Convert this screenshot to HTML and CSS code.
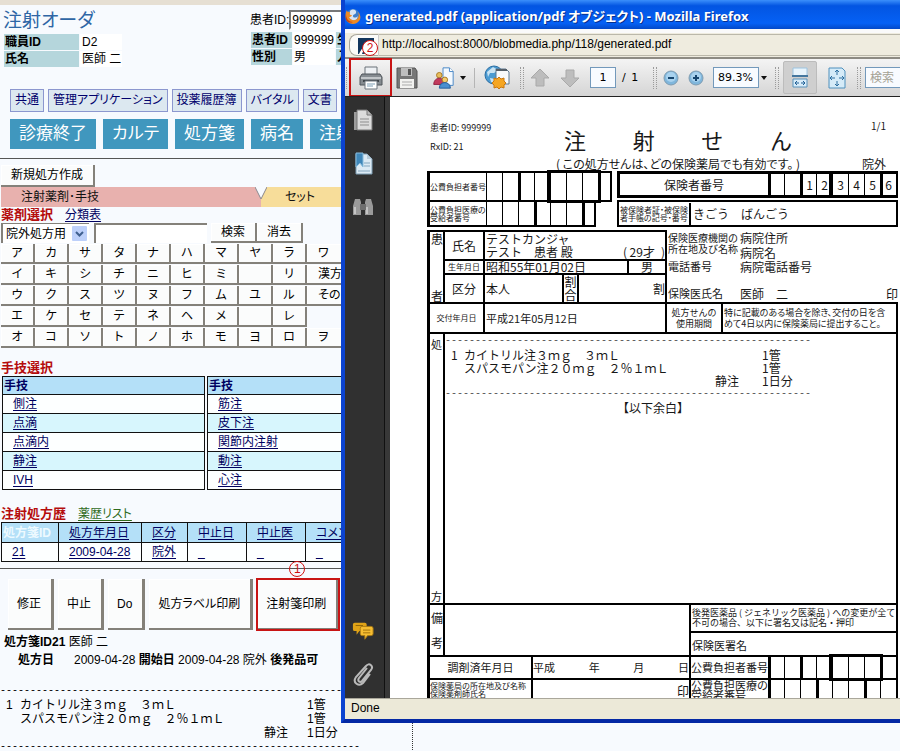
FILE: index.html
```html
<!DOCTYPE html>
<html lang="ja">
<head>
<meta charset="utf-8">
<title>注射オーダ</title>
<link rel="stylesheet" href="styles.css">
</head>
<body>
<main class="page">
  <header class="head">
    <div class="staff">
      <h1>注射オーダ</h1>
      <table class="info staff-info">
        <tr><th scope="row">職員ID</th><td>D2</td></tr>
        <tr><th scope="row">氏名</th><td>医師 二</td></tr>
      </table>
    </div>
    <div class="patient">
      <div class="patient-search"><label for="pid">患者ID:</label><input id="pid" type="text" value="999999"></div>
      <table class="info patient-info">
        <tr><th scope="row">患者ID</th><td>999999</td><th scope="row">生</th></tr>
        <tr><th scope="row">性別</th><td>男</td><th scope="row">入</th></tr>
      </table>
    </div>
  </header>

  <nav class="subnav">
    <a href="#">共通</a><a href="#">管理アプリケーション</a><a href="#">投薬履歴簿</a><a href="#">バイタル</a><a href="#">文書</a><a href="#">&nbsp;</a>
  </nav>
  <nav class="mainnav">
    <a href="#">診療終了</a><a href="#">カルテ</a><a href="#">処方箋</a><a href="#">病名</a><a href="#">注射</a>
  </nav>
  <hr>

  <section class="order">
    <button class="btn new-rx" type="button">新規処方作成</button>
    <div class="tabs">
      <a class="tab tab-drug" href="#">注射薬剤･手技</a>
      <svg class="tab-notch" viewBox="0 0 12 20"><path d="M0 0 6 12 12 0z" fill="#f7fafe"/><path d="M6 12 12 0V20H6z" fill="#f7dd9a"/><path d="M0 0 6 12 12 0" fill="none" stroke="#8a8a90"/></svg>
      <a class="tab tab-set" href="#">セット</a>
    </div>
    <div class="sec-title"><h2>薬剤選択</h2><a href="#">分類表</a></div>
    <div class="search">
      <div class="select-wrap">
        <select aria-label="処方区分"><option>院外処方用</option></select>
        <svg class="select-arrow" viewBox="0 0 15 15"><rect width="15" height="15" rx="1" fill="#bdd0fa"/><path d="M4 6l3.500 3.500L11 6" fill="none" stroke="#40608f" stroke-width="2"/></svg>
      </div>
      <input type="text" aria-label="薬剤名">
      <button class="btn" type="button">検索</button><button class="btn" type="button">消去</button>
    </div>
    <div class="kana">
      <button class="btn">ア</button><button class="btn">カ</button><button class="btn">サ</button><button class="btn">タ</button><button class="btn">ナ</button><button class="btn">ハ</button><button class="btn">マ</button><button class="btn">ヤ</button><button class="btn">ラ</button><button class="btn wide">ワ</button>
      <button class="btn">イ</button><button class="btn">キ</button><button class="btn">シ</button><button class="btn">チ</button><button class="btn">ニ</button><button class="btn">ヒ</button><button class="btn">ミ</button><button class="btn"></button><button class="btn">リ</button><button class="btn wide">漢方</button>
      <button class="btn">ウ</button><button class="btn">ク</button><button class="btn">ス</button><button class="btn">ツ</button><button class="btn">ヌ</button><button class="btn">フ</button><button class="btn">ム</button><button class="btn">ユ</button><button class="btn">ル</button><button class="btn wide">その</button>
      <button class="btn">エ</button><button class="btn">ケ</button><button class="btn">セ</button><button class="btn">テ</button><button class="btn">ネ</button><button class="btn">ヘ</button><button class="btn">メ</button><button class="btn"></button><button class="btn">レ</button><span></span>
      <button class="btn">オ</button><button class="btn">コ</button><button class="btn">ソ</button><button class="btn">ト</button><button class="btn">ノ</button><button class="btn">ホ</button><button class="btn">モ</button><button class="btn">ヨ</button><button class="btn">ロ</button><button class="btn wide">ヲ</button>
    </div>
  </section>

  <section class="technique">
    <h2>手技選択</h2>
    <div class="tech-tables">
      <table class="grid-table tech">
        <tr><th>手技</th></tr>
        <tr><td><a href="#">側注</a></td></tr>
        <tr><td><a href="#">点滴</a></td></tr>
        <tr><td><a href="#">点滴内</a></td></tr>
        <tr><td><a href="#">静注</a></td></tr>
        <tr><td><a href="#">IVH</a></td></tr>
      </table>
      <table class="grid-table tech">
        <tr><th>手技</th></tr>
        <tr><td><a href="#">筋注</a></td></tr>
        <tr><td><a href="#">皮下注</a></td></tr>
        <tr><td><a href="#">関節内注射</a></td></tr>
        <tr><td><a href="#">動注</a></td></tr>
        <tr><td><a href="#">心注</a></td></tr>
      </table>
    </div>
  </section>

  <section class="history">
    <div class="sec-title"><h2>注射処方歴</h2><a class="green" href="#">薬歴リスト</a></div>
    <table class="grid-table hist">
      <colgroup><col class="c-id"><col class="c-date"><col class="c-kind"><col class="c-stop"><col class="c-stop"><col class="c-note"></colgroup>
      <tr><th class="current">処方箋ID</th><th><a href="#">処方年月日</a></th><th><a href="#">区分</a></th><th><a href="#">中止日</a></th><th><a href="#">中止医</a></th><th><a href="#">コメン</a></th></tr>
      <tr><td><a href="#">21</a></td><td><a href="#">2009-04-28</a></td><td><a href="#">院外</a></td><td><a href="#">_</a></td><td><a href="#">_</a></td><td><a href="#">_</a></td></tr>
    </table>
  </section>
  <hr>

  <section class="detail">
    <div class="actions">
      <button class="btn" type="button">修正</button><button class="btn" type="button">中止</button><button class="btn" type="button">Do</button><button class="btn" type="button">処方ラベル印刷</button>
      <div class="marked"><button class="btn" type="button">注射箋印刷</button><span class="mark">1</span></div>
    </div>
    <p class="who"><b>処方箋ID21</b> 医師 二</p>
    <p class="when"><b class="when-label">処方日</b><span>2009-04-28</span> <b>開始日</b> <span>2009-04-28 院外</span> <b>後発品可</b></p>
    <div class="rx">
      <div class="dashes">--------------------------------------------------------------------</div>
      <div class="rx-lines">
        <span>1</span><span>カイトリル注３ｍｇ　３ｍＬ</span><span></span><span>1管</span>
        <span></span><span>スパスモパン注２０ｍｇ　２％１ｍＬ</span><span></span><span>1管</span>
        <span></span><span></span><span>静注</span><span>1日分</span>
      </div>
      <div class="dashes">------------------------------------------------------------</div>
    </div>
  </section>
</main>

<section class="window">
  <div class="titlebar">
    <svg class="fox" viewBox="0 0 16 16"><circle cx="8" cy="8" r="7" fill="#3f7fc9"/><path d="M5 3c3-3 7-1 6 2-1 2-3 1-3 3s3 2 5 0l-1 3c-3 3-8 1-8-2z" fill="#d7e4f2"/><path d="M2 2c0 2 1 2 3 2-1 2 0 3 2 3-1 2-2 2-3 2 2 4 7 4 9 1 1-2 1-4 0-6 3 3 3 7 1 9-3 4-9 4-12 0C0 10 0 5 2 2z" fill="#ef8a23"/><path d="M1 6c0 5 3 8 7 8-4 2-9-1-7-8z" fill="#c74514"/></svg>
    <span>generated.pdf (application/pdf オブジェクト) - Mozilla Firefox</span>
  </div>
  <div class="urlbar">
    <span class="favicon">
      <svg viewBox="0 0 16 16"><rect width="16" height="16" fill="#12365c"/><path d="M1 16C4 9 9 4 16 3v2C11 6 6 10 4 16z" fill="#fff"/></svg>
      <span class="mark">2</span>
    </span>
    <span class="url">http://localhost:8000/blobmedia.php/118/generated.pdf</span>
  </div>
  <div class="toolbar">
    <span class="grip"></span>
    <button class="tool print" aria-label="印刷">
      <svg viewBox="0 0 26 26"><path d="M7 2h12v8H7z" fill="#eef1f4" stroke="#6b7279"/><path d="M4 9h18l2 3v8H2v-8z" fill="#858b90" stroke="#4f555a"/><path d="M3 12h20v2H3z" fill="#c3c7ca"/><path d="M5 15h16v2H5z" fill="#3f454a"/><path d="M7 16h12v8H7z" fill="#fff" stroke="#6f777e"/><path d="M9 19h8M9 21h6" stroke="#7d9db3"/></svg>
    </button>
    <button class="tool save" aria-label="保存">
      <svg viewBox="0 0 24 24"><path d="M2 2h18l2 3v17H2z" fill="#777" stroke="#555"/><path d="M6 2h11v8H6z" fill="#bfbfbf"/><path d="M13 3h3v6h-3z" fill="#555"/><path d="M5 13h14v9H5z" fill="#f2f2f0"/><path d="M7 16h10M7 19h10" stroke="#aaa"/></svg>
    </button>
    <button class="tool collab" aria-label="共同作業">
      <svg viewBox="0 0 26 26"><path d="M13 2h7l4 4v15H13z" fill="#f4f9fe" stroke="#4383c4"/><path d="M20 2v4h4" fill="#fff" stroke="#4383c4"/><circle cx="9" cy="10" r="3" fill="#e8bd5c" stroke="#a57621"/><path d="M3 20c0-9 12-9 12 0z" fill="#c23a5c" stroke="#8f2040"/><circle cx="15" cy="15" r="3" fill="#f3cc6c" stroke="#a57621"/><path d="M9 24c0-8 12-8 12 0z" fill="#4a8fd0" stroke="#235c9a"/></svg>
      <i class="caret"></i>
    </button>
    <span class="rule"></span>
    <button class="tool web" aria-label="Web">
      <svg viewBox="0 0 28 28"><circle cx="11" cy="11" r="9" fill="#4b9bd2" stroke="#2b6ea3"/><path d="M4 8l6-5 5 3-4 3H7l-2 4zM7 14l5 1-1 4-3-1z" fill="#c9e3f3"/><path d="M13 5h10l3 3v12H13z" fill="#f8fafc" stroke="#5f7890"/><path d="M13 5h11v2H13z" fill="#555f69"/><path d="M16 13l2 2 3-1v3l2 2-2 2v3l-3-1-2 2-2-2-3 1v-3l-2-2 2-2v-3l3 1z" fill="#f5a623" stroke="#c97812"/></svg>
    </button>
    <span class="grip"></span>
    <button class="tool arrow" aria-label="前のページ"><svg viewBox="0 0 20 20"><path d="M10 1l9 9h-5v8H6v-8H1z" fill="#bdbdbd" stroke="#a9a9a9"/></svg></button>
    <button class="tool arrow" aria-label="次のページ"><svg viewBox="0 0 20 20"><path d="M10 19l9-9h-5V2H6v8H1z" fill="#bdbdbd" stroke="#a9a9a9"/></svg></button>
    <input class="field page-no" type="text" value="1" aria-label="ページ"><span class="page-total">/&ensp;1</span>
    <span class="grip"></span>
    <button class="tool zoom" aria-label="縮小"><svg viewBox="0 0 16 16"><circle cx="8" cy="8" r="7" fill="#7fb6dc" stroke="#7f9cb1"/><circle cx="8" cy="7" r="5" fill="#a9d2ee"/><path d="M5 8h6" stroke="#17466f" stroke-width="2"/></svg></button>
    <button class="tool zoom" aria-label="拡大"><svg viewBox="0 0 16 16"><circle cx="8" cy="8" r="7" fill="#7fb6dc" stroke="#7f9cb1"/><circle cx="8" cy="7" r="5" fill="#a9d2ee"/><path d="M5 8h6M8 5v6" stroke="#17466f" stroke-width="2"/></svg></button>
    <input class="field zoom-level" type="text" value="89.3%" aria-label="倍率"><span class="zoom-caret"><i class="caret"></i></span>
    <span class="grip"></span>
    <button class="tool fit-width" aria-label="幅に合わせる"><svg viewBox="0 0 18 22"><path d="M2 1h14v8H2z" fill="#e8f4fc" stroke="#9cc3df"/><path d="M1 9h16" stroke="#44779f" stroke-width="2"/><path d="M2 12h14v8H2z" fill="#d8ecf9" stroke="#5a93bb"/><path d="M4 16h4M10 16h4M6 14l-2 2 2 2M12 14l2 2-2 2" fill="none" stroke="#1f5f95"/></svg></button>
    <button class="tool fit-page" aria-label="ページ全体"><svg viewBox="0 0 18 22"><path d="M1 1h13l3 3v17H1z" fill="#d5ebf8" stroke="#4e90bd"/><path d="M9 3v5M9 14v5M2 11h5M11 11h5M7 5l2-2 2 2M7 17l2 2 2-2M4 9l-2 2 2 2M14 9l2 2-2 2" fill="none" stroke="#2d6e9f"/></svg></button>
    <span class="grip"></span>
    <input class="field find" type="text" placeholder="検索" aria-label="検索">
  </div>

  <div class="viewer">
    <aside class="side">
      <svg class="side-icon" viewBox="0 0 20 24"><path d="M1 3h12v18H1z" fill="#9b9b9b"/><path d="M4 1h10l5 5v15H4z" fill="#dcdcdc" stroke="#777"/><path d="M14 1v5h5" fill="#bbb" stroke="#777"/><path d="M7 10h9M7 13h9M7 16h9" stroke="#8d8d8d"/></svg>
      <svg class="side-icon" viewBox="0 0 20 24"><path d="M3 2h11l5 5v15H3z" fill="#dceaf4" stroke="#7d9db3"/><path d="M14 2v5h5" fill="#b7cbd9"/><path d="M11 11h6M11 14h6M5 19h12" stroke="#84a6be"/><path d="M3 1h7v14l-3-4-4 4z" fill="#3f86b8" stroke="#88bbdc"/></svg>
      <svg class="side-icon low" viewBox="0 0 22 20"><path d="M3 2h5l1 3v13H1V9zM19 2h-5l-1 3v13h8V9z" fill="#9a9a9a"/><path d="M8 7h6v6H8z" fill="#6f6f6f"/><path d="M3 10v7M15 10v7" stroke="#c5c5c5" stroke-width="2"/></svg>
      <span class="side-fill"></span>
      <svg class="side-icon" viewBox="0 0 24 20"><path d="M3 1h11q2 0 2 2v5q0 2-2 2H8l-3 4V10H3Q1 10 1 8V3q0-2 2-2z" fill="#e0a317"/><path d="M4 4h8" stroke="#8a6208"/><path d="M11 5h10q2 0 2 2v6q0 2-2 2h-4l-3 4v-4h-3q-2 0-2-2V7q0-2 2-2z" fill="#f6bd31" stroke="#a97a13"/><path d="M12 9h8M12 12h8" stroke="#9b6d0a"/></svg>
      <svg class="side-icon" viewBox="0 0 22 24"><path d="M15 6 7 16c-2 3 1 5 3 3L19 8c3-4-2-8-5-4L4 15c-4 6 3 10 7 6l7-9" fill="none" stroke="#b9b9b9" stroke-width="2"/></svg>
    </aside>
    <span class="splitter"></span>
    <article class="doc">
      <header class="doc-head">
        <div class="doc-meta"><span>患者ID: 999999</span><span>RxID: 21</span></div>
        <div class="doc-title"><h3><span>注</span><span>射</span><span>せ</span><span>ん</span></h3><p>( この処方せんは、どの保険薬局でも有効です。 )</p></div>
        <div class="doc-right"><span class="page-count">1/1</span><span>院外</span></div>
      </header>

      <div class="insure">
        <div class="public">
          <div class="num-row first"><span class="lab tiny">公費負担者番号</span><i></i><i></i><i class="k"></i><i></i><span class="boxed"><i></i><i></i><i></i></span><i></i></div>
          <div class="num-row second"><span class="lab tiny">公費負担医療の<br>受給者番号</span><i></i><i></i><i></i><i class="k"></i><i></i><i></i><i class="k"></i></div>
        </div>
        <div class="insurer">
          <div class="num-row number"><span class="lab">保険者番号</span><i class="k"></i><i></i><i class="k">1</i><i>2</i><span class="boxed"><i>3</i><i>4</i><i>5</i></span><i>6</i></div>
          <div class="card"><span class="tiny">被保険者証・被保険<br>者手帳の記号・番号</span><span>きごう　ばんごう</span></div>
        </div>
      </div>

      <div class="person">
        <div class="person-box">
          <div class="vert"><span>患</span><span>者</span></div>
          <div class="person-rows">
            <div class="p-row name"><span class="p-lab">氏名</span><div class="name-text"><span>テストカンジャ</span><span class="kanji"><span>テスト　患者 殿</span><span>( 29才&ensp;)</span></span></div></div>
            <div class="p-row birth"><span class="p-lab small">生年月日</span><span class="grow">昭和55年01月02日</span><span class="sex">男</span></div>
            <div class="p-row kind"><span class="p-lab">区分</span><span class="grow">本人</span><span class="ratio">割<br>合</span><span class="percent">割</span></div>
          </div>
        </div>
        <dl class="clinic">
          <dt class="two">保険医療機関の<br>所在地及び名称</dt><dd class="two-val">病院住所<br>病院名</dd>
          <dt>電話番号</dt><dd>病院電話番号</dd>
          <dt class="doctor">保険医氏名</dt><dd class="doctor"><span>医師　二</span><span>印</span></dd>
        </dl>
      </div>

      <div class="f-row issue">
        <span class="issue-lab">交付年月日</span><span class="issue-date">平成21年05月12日</span>
        <span class="term">処方せんの<br>使用期間</span><span class="term-note">特に記載のある場合を除き、交付の日を含<br>めて4日以内に保険薬局に提出すること。</span>
      </div>

      <div class="f-row presc">
        <div class="vert"><span>処</span><span>方</span></div>
        <div class="presc-body">
          <div class="dashes">-------------------------------------------------------------</div>
          <div class="rx-lines">
            <span>1</span><span>カイトリル注３ｍｇ　３ｍＬ</span><span></span><span>1管</span>
            <span></span><span>スパスモパン注２０ｍｇ　２％１ｍＬ</span><span></span><span>1管</span>
            <span></span><span></span><span>静注</span><span>1日分</span>
          </div>
          <div class="dashes">-------------------------------------------------------------</div>
          <p class="blank">【以下余白】</p>
        </div>
      </div>

      <div class="f-row notes">
        <div class="vert"><span>備</span><span>考</span></div>
        <div class="notes-space"></div>
        <div class="generic"><p>後発医薬品 ( ジェネリック医薬品 ) への変更が全て<br>不可の場合、以下に署名又は記名・押印</p><p class="sign">保険医署名</p></div>
      </div>

      <div class="f-row filled">
        <span class="filled-lab">調剤済年月日</span>
        <span class="filled-date"><span>平成</span><span>年</span><span>月</span><span>日</span></span>
        <div class="num-row"><span class="lab">公費負担者番号</span><i class="k"></i><i></i><i class="k"></i><i></i><span class="boxed"><i></i><i></i><i></i></span><i></i></div>
      </div>
      <div class="f-row pharmacy">
        <span class="filled-lab small">保険薬局の所在地及び名称<br>保険薬剤師氏名</span>
        <span class="seal">印</span>
        <div class="num-row"><span class="lab">公費負担医療の<br>受給者番号</span><i class="k"></i><i></i><i></i><i class="k"></i><i></i><i></i><i class="k"></i><i></i></div>
      </div>
    </article>
  </div>
  <footer class="status">Done</footer>
</section>
</body>
</html>
```

FILE: styles.css
```css
* { box-sizing: border-box; }

body {
  margin: 0;
  background: #f7fafe;
  color: #000;
  font: 12px/14px "Liberation Sans", "Noto Sans CJK JP", sans-serif;
}

h1, h2, h3, p, dl, dd { margin: 0; }
button, input, select { font: inherit; color: inherit; margin: 0; border-radius: 0; }
table { border-collapse: collapse; }
i { font-style: normal; }

.page {
  position: relative;
  height: 100vh;
  overflow: hidden;
  border-top: 5px solid #e6dfd3;
  font-feature-settings: "palt";
}
.page hr { margin: 0; border: 0; border-top: 1px solid #555; }

/* page header */
.head { display: flex; height: 84px; }
.staff { width: 247px; padding: 4px 3px 3px; }
.staff h1 { color: #2f66a5; font-size: 19px; font-weight: 400; line-height: 24px; }
.info { border-collapse: separate; border-spacing: 1px; }
.info th, .info td { height: 16px; padding: 0 1px; text-align: left; white-space: nowrap; }
.info th { background: #b5d6dc; font-weight: 700; }
.info td { background: #fff; }
.staff-info th { width: 75px; }
.staff-info td { width: 42px; padding-left: 2px; }
.patient { padding: 4px 3px; }
.patient-search { display: flex; align-items: center; height: 22px; }
.patient-search input { width: 90px; height: 20px; padding: 0 1px; background: #fff; border: 2px solid #fff; border-top-color: #777; border-left-color: #777; }
.patient-info th { width: 41px; }
.patient-info td { width: 39px; }

.subnav, .mainnav { display: flex; padding-left: 10px; overflow: hidden; }
.subnav { gap: 4px; }
.subnav a { height: 23px; padding: 0 4px; border: 1px solid #8c97cf; background: #dce8f0; color: #00006c; line-height: 21px; text-decoration: none; white-space: nowrap; }
.mainnav { gap: 7px; margin: 7px 0 9px; }
.mainnav a { height: 30px; padding: 0 9px; background: #4097be; color: #fff; font-size: 17px; line-height: 29px; text-decoration: none; white-space: nowrap; }

.btn {
  padding: 0;
  background: #fbfcfc;
  border: 0 solid #84817a;
  border-width: 0 2px 2px 0;
  box-shadow: inset 1px 1px 0 #fff;
  color: #000;
  white-space: nowrap;
}

/* drug selection */
.order { padding: 6px 0 0 1px; }
.new-rx { display: block; width: 94px; height: 22px; }
.tabs { display: flex; height: 20px; }
.tab { color: #111; line-height: 20px; text-decoration: none; }
.tab-drug { width: 254px; padding-left: 20px; background: #e8b1ae; }
.tab-notch { width: 12px; height: 20px; background: #e8b1ae; }
.tab-set { flex: 1; padding-left: 18px; background: #f7dd9a; }
.sec-title { display: flex; align-items: center; gap: 12px; height: 16px; }
h2 { color: #b50d0d; font-size: 13px; line-height: 16px; }
a { color: #000060; text-underline-offset: 2px; }
.green { color: #2f6b1c; }
.search { display: flex; height: 21px; }
.select-wrap { position: relative; width: 88px; margin-right: 5px; }
.select-wrap select { width: 100%; height: 20px; padding: 0 3px; appearance: none; background: #fff; border: 0 solid #84817a; border-width: 1px 0 0 2px; }
.select-arrow { position: absolute; top: 3px; right: 2px; width: 15px; height: 15px; pointer-events: none; }
.search input { width: 113px; height: 20px; margin-right: 4px; background: #fff; border: 0 solid #84817a; border-width: 2px 0 0 2px; }
.search .btn { width: 46px; height: 20px; }
.kana { display: grid; grid-template-columns: repeat(9, 34px) 60px; grid-auto-rows: 20px; gap: 0; row-gap: 1px; }
.kana .wide { padding-left: 11px; text-align: left; }

/* tables */
.technique { padding: 12px 0 0 1px; }
.tech-tables { display: flex; gap: 2px; padding-left: 1px; }
.tech { width: 203px; flex: none; }
.grid-table th, .grid-table td { border: 1px solid #111; height: 19px; padding: 0; white-space: nowrap; }
.grid-table th { background: #b4e0f8; color: #000060; }
.tech th { height: 18px; padding-left: 1px; text-align: left; }
.tech td { padding-left: 10px; background: #fdffff; }
.tech tr:nth-child(odd) td { background: #d7f6fd; }
.history { padding: 16px 0 6px 1px; }
.hist { width: 383px; table-layout: fixed; }
.hist th { height: 20px; font-weight: 400; }
.hist th, .hist td { padding-left: 10px; text-align: left; }
.hist td { background: #fdffff; }
.hist th.current { padding-left: 1px; color: #eefaff; font-weight: 700; }
.c-id { width: 57px; }
.c-date { width: 83px; }
.c-kind { width: 46px; }
.c-stop { width: 59px; }
.c-note { width: 79px; }

/* order detail */
.actions { display: flex; gap: 4px; padding: 10px 0 5px 8px; }
.actions .btn { height: 51px; padding: 0 10px 0 9px; border-width: 0 3px 2px 0; }
.marked { position: relative; outline: 2px solid #c81414; outline-offset: -1px; }
.mark {
  position: absolute;
  width: 16px;
  height: 16px;
  border: 1px solid #d01212;
  border-radius: 50%;
  color: #d01212;
  line-height: 14px;
  text-align: center;
}
.marked .mark { left: 32px; top: -18px; }
.who { padding-left: 4px; }
.when { padding: 4px 0 0 18px; }
.when-label { display: inline-block; width: 56px; }
.rx { width: 413px; margin-top: 9px; padding: 8px 0 20px; border-right: 1px dotted #333; }
.dashes { font: 10px/14px "Liberation Mono", monospace; white-space: pre; }
.rx-lines { display: grid; grid-template-columns: 14px 244px 43px 1fr; padding-left: 6px; font-feature-settings: normal; white-space: nowrap; grid-auto-rows: 14px; }

/* browser window */
.window {
  position: absolute;
  top: 0;
  left: 341px;
  right: 0;
  display: flex;
  flex-direction: column;
  height: calc(100vh - 28px);
  overflow: hidden;
  border-left: 4px solid #0b43d0;
  border-bottom: 4px solid #0428a4;
  background: #ece9d8;
}
.titlebar { display: flex; align-items: center; gap: 4px; height: 29px; padding: 3px 0 0; background: linear-gradient(#3b8ffb, #0355e2 20%, #0561f5 80%, #0349c8); color: #fff; font: bold 13px/16px "Noto Sans", "Noto Sans CJK JP", sans-serif; font-feature-settings: "palt"; text-shadow: 1px 1px 0 #06318f; white-space: nowrap; }
.fox { width: 16px; height: 16px; flex: none; }
.urlbar { display: flex; align-items: center; height: 30px; padding: 0 0 0 4px; border-top: 4px solid #fafafa; border-bottom: 2px solid #8d8b83; background: #efecdf; }
.favicon { position: relative; width: 30px; height: 22px; padding: 3px 8px; border: 1px solid #a8a69b; border-right-color: #ccc; border-radius: 8px 0 0 8px; background: #fbfbf8; }
.favicon svg { display: block; width: 16px; height: 16px; }
.favicon .mark { left: 12px; top: 5px; background: #fff; }
.url { flex: 1; height: 22px; padding-left: 3px; border: solid #bbb8aa; border-width: 1px 0; line-height: 18px; }

.toolbar { display: flex; align-items: center; height: 37px; flex: none; background: linear-gradient(#f4f4f4, #d5d5d5); font-family: "DejaVu Sans", "Noto Sans CJK JP", sans-serif; font-size: 11px; }
.toolbar > * { flex: none; }
.tool { display: flex; align-items: center; justify-content: center; height: 33px; padding: 0; border: 0; background: none; }
.tool svg { width: 24px; height: 24px; }
.grip { width: 4px; height: 22px; margin: 0 1px; border: dotted #9a9a9a; border-width: 0 1px; }
.print { width: 43px; height: 39px; margin-left: -2px; border: 2px solid #c81414; }
.tool.print svg { width: 26px; height: 26px; }
.save { width: 30px; }
.collab { width: 52px; gap: 5px; }
.caret { border: 3px solid transparent; border-top: 4px solid #111; border-bottom: 0; }
.rule { width: 1px; height: 20px; background: #b5b5b5; }
.web { width: 44px; }
.tool.web svg { width: 28px; height: 28px; }
.arrow { width: 30px; }
.arrow svg { width: 20px; height: 20px; }
.field { height: 21px; padding: 0 4px; border: 1px solid #7399bb; background: #f8fbff; }
.page-no { width: 26px; margin-left: 5px; text-align: center; }
.page-total { width: 36px; padding-left: 6px; }
.zoom { width: 25px; }
.tool.zoom svg { width: 16px; height: 16px; }
.zoom-level { width: 46px; margin-left: 5px; }
.zoom-caret { display: flex; width: 15px; padding-left: 2px; }
.fit-width { width: 34px; margin-left: 3px; border: 1px solid #bcbcbc; border-radius: 2px; background: #cfcfcf; }
.fit-width svg, .fit-page svg { width: 18px; height: 22px; }
.fit-page { width: 39px; }
.find { width: 70px; margin-left: 3px; font-size: 12px; }
.find::placeholder { color: #a5a294; opacity: 1; }

/* viewer */
.viewer { display: flex; flex: 1; min-height: 0; overflow: hidden; border-top: 1px solid #222; background: #fff; }
.side { display: flex; flex-direction: column; gap: 19px; width: 39px; padding: 12px 7px; background: #303030; }
.side-icon { width: 22px; height: 24px; }
.side-fill { flex: 1; }
.splitter { width: 6px; border-left: 1px solid #111; background: #383838; }
.doc { flex: 1; padding: 24px 2px 0 37px; color: #181818; font-family: "Noto Sans CJK JP", sans-serif; }
.status { height: 21px; padding-left: 6px; flex: none; border-top: 1px solid #aaa79b; font-size: 12px; line-height: 19px; }

.doc-head { display: flex; height: 50px; }
.doc-meta { display: flex; flex-direction: column; gap: 5px; width: 126px; padding-left: 3px; font-size: 9px; }
.doc-title { width: 250px; white-space: nowrap; }
.doc-title h3 { display: flex; justify-content: space-between; padding: 0 11px; font-size: 22px; font-weight: 400; line-height: 36px; }
.doc-title p { font-feature-settings: "palt"; text-align: center; }
.doc-right { display: flex; flex: 1; flex-direction: column; justify-content: space-between; align-items: flex-end; padding-right: 12px; }
.page-count { font-size: 10px; line-height: 10px; }

.num-row { display: flex; line-height: 22px; }
.num-row i { width: 16px; flex: none; border-left: 1px solid #000; text-align: center; }
.num-row i.k { border-left-width: 3px; }
.num-row .lab { display: flex; flex: 1; align-items: center; justify-content: center; line-height: 11px; white-space: nowrap; }
.boxed { position: relative; display: flex; outline: 3px solid #000; }
.num-row .tiny, .tiny { font-size: 8px; line-height: 8px; white-space: nowrap; font-feature-settings: "palt"; }

.insure { display: flex; gap: 5px; align-items: flex-start; }
.public { width: 185px; flex: none; }
.first { height: 31px; border: solid #000; border-width: 2px 2px 2px 3px; }
.second { width: 169px; height: 25px; border: solid #000; border-width: 0 2px 2px 3px; }
.insurer { flex: 1; }
.number { height: 27px; margin-bottom: 2px; border: 3px solid #000; border-right-width: 2px; }
.card { display: flex; align-items: center; height: 27px; border: 2px solid #000; line-height: 23px; }
.card .tiny { width: 72px; padding: 3px 1px; border-right: 2px solid #000; }
.card span + span { padding-left: 2px; }

.person { display: flex; margin-top: 3px; border-left: 3px solid #000; }
.person-box { display: flex; width: 237px; flex: none; height: 72px; border: solid #000; border-width: 2px 2px 0 0; }
.vert { display: flex; flex-direction: column; justify-content: space-between; width: 15px; flex: none; padding-left: 1px; border-right: 2px solid #000; line-height: 13px; }
.person-rows { flex: 1; }
.p-row { display: flex; align-items: stretch; border-bottom: 2px solid #000; }
.p-lab { display: flex; align-items: center; justify-content: center; width: 40px; flex: none; border-right: 2px solid #000; }
.p-lab.small { font-size: 8px; }
.name { height: 29px; }
.name-text { flex: 1; padding-left: 1px; line-height: 13px; white-space: nowrap; }
.kanji { display: flex; justify-content: space-between; }
.birth { height: 14px; line-height: 12px; }
.grow { flex: 1; padding-left: 1px; white-space: nowrap; }
.sex { width: 38px; border-left: 2px solid #000; text-align: center; }
.kind { height: 27px; border-bottom: 0; line-height: 27px; }
.ratio { width: 17px; border: solid #000; border-width: 0 2px; line-height: 13px; text-align: center; }
.percent { width: 86px; text-align: right; }
.clinic { display: grid; grid-template-columns: 72px 1fr; grid-template-rows: 29px 27px 16px; flex: 1; padding-left: 1px; white-space: nowrap; }
.clinic dt { font-size: 11px; line-height: 15px; }
.clinic .two { font-size: 10px; line-height: 11px; padding-top: 2px; }
.clinic dd { line-height: 15px; }
.doctor { display: flex; justify-content: space-between; }

.f-row { display: flex; border: solid #000; border-width: 2px 2px 0 3px; }
.issue { height: 30px; align-items: stretch; line-height: 28px; }
.issue span { white-space: nowrap; }
.issue-lab { width: 55px; border-right: 2px solid #000; font-size: 8px; text-align: center; }
.issue-date { width: 182px; padding-left: 1px; border-right: 2px solid #000; font-size: 11px; }
.issue .term { width: 56px; padding-top: 3px; border-right: 2px solid #000; font-size: 9px; line-height: 11px; text-align: center; }
.issue .term-note { flex: 1; padding: 3px 1px; font-size: 9px; line-height: 11px; font-feature-settings: "palt"; }
.presc { height: 271px; }
.presc .vert { padding-top: 4px; font-size: 11px; }
.presc-body { flex: 1; }
.presc .dashes { color: #555; }
.presc .rx-lines { grid-template-columns: 13px 251px 47px 1fr; grid-auto-rows: 13px; }
.blank { padding: 0 0 0 172px; }
.notes { height: 52px; }
.notes .vert { justify-content: space-around; }
.notes-space { flex: 1; }
.generic { width: 207px; border-left: 2px solid #000; font-size: 9px; line-height: 10px; white-space: nowrap; }
.generic p { height: 26px; padding: 3px 1px; }
.generic .sign { border-top: 2px solid #000; font-size: 11px; line-height: 18px; }
.filled { height: 23px; line-height: 20px; }
.filled-lab { width: 103px; flex: none; border-right: 2px solid #000; font-size: 11px; text-align: center; }
.filled-date { display: flex; flex: 1; justify-content: space-between; font-size: 11px; }
.filled .num-row, .pharmacy .num-row { width: 207px; border-left: 2px solid #000; font-size: 11px; }
.f-row .num-row .lab { justify-content: flex-start; }
.pharmacy .num-row .lab { align-items: flex-start; line-height: 10px; }
.filled-lab.small { padding-top: 2px; font-size: 8px; line-height: 8px; text-align: left; white-space: nowrap; }
.pharmacy { height: 34px; }
.seal { flex: 1; text-align: right; line-height: 22px; }
```
